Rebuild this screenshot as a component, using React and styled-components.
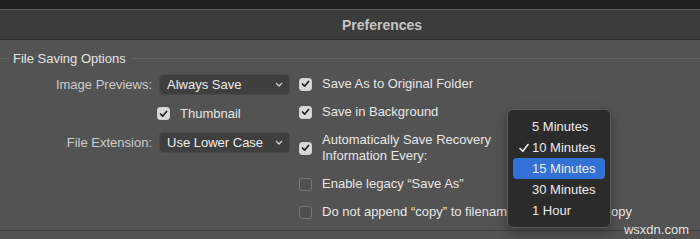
import React from "react";
import styled, { createGlobalStyle } from "styled-components";

const Global = createGlobalStyle`
  html, body { margin: 0; padding: 0; background: #535353; overflow: hidden; }
  body { font-family: "Liberation Sans", Arial, sans-serif; font-size: 13px; }
`;

const Page = styled.div`
  position: relative;
  width: 700px;
  height: 239px;
  background: #535353;
  overflow: hidden;
`;

const TopStrip = styled.div`
  height: 9px;
  background: #1f1f1f;
  border-bottom: 1px solid #5e5e5e;
`;

const TitleBar = styled.div`
  height: 29px;
  display: flex;
  align-items: center;
  justify-content: center;
  padding-left: 64px;
  background: #3c3c3c;
  border-bottom: 1px solid #2c2c2c;
  color: #c4c4c4;
  font-weight: bold;
  font-size: 14px;
`;

const Panel = styled.div`
  height: 180px;
  padding-top: 10px;
  border-bottom: 1px solid #404040;
`;

const GroupHeader = styled.div`
  display: flex;
  align-items: center;
  gap: 3px;
  height: 16px;
  color: #e4e4e4;
  font-size: 13px;
  &::before, &::after {
    content: "";
    height: 1px;
    background: #646464;
  }
  &::before { width: 10px; }
  &::after { flex: 1; margin-left: 2px; }
`;

const Body = styled.div`
  display: flex;
  align-items: flex-start;
  gap: 9px;
`;

const LeftCol = styled.div`
  width: 290px;
  margin-top: 8px;
  display: grid;
  grid-template-columns: 152px 131px;
  grid-auto-rows: 21px;
  column-gap: 7px;
  row-gap: 8px;
  align-items: center;
`;

const Label = styled.div`
  text-align: right;
  color: #cdcdcd;
  line-height: 16px;
`;

const Select = styled.div`
  height: 21px;
  box-sizing: border-box;
  display: flex;
  align-items: center;
  justify-content: space-between;
  padding: 0 6px 0 7px;
  background: #3f3f3f;
  border: 1px solid #4a4a4a;
  border-radius: 4px;
  color: #ececec;
`;

const Chevron = () => (
  <svg width="8" height="5" viewBox="0 0 8 5">
    <polyline points="1,1 4,4 7,1" fill="none" stroke="#d0d0d0" strokeWidth="1.3" />
  </svg>
);

const CheckRow = styled.div`
  display: flex;
  align-items: center;
  gap: ${(p) => p.$gap || 10}px;
  margin-left: ${(p) => p.$shift || 0}px;
  color: #e6e6e6;
  line-height: 16px;
`;

const Box = styled.div`
  flex: none;
  width: 13px;
  height: 13px;
  box-sizing: border-box;
  border-radius: 3px;
  display: flex;
  align-items: center;
  justify-content: center;
  background: ${(p) => (p.$on ? "#d9d9d9" : "#4f4f4f")};
  border: 1px solid ${(p) => (p.$on ? "#cfcfcf" : "#767676")};
`;

const Check = ({ on }) => (
  <Box $on={on}>
    {on && (
      <svg width="9" height="8" viewBox="0 0 9 8">
        <polyline points="1.5,4 3.6,6.2 7.6,1.5" fill="none" stroke="#222" strokeWidth="1.7" strokeLinecap="round" strokeLinejoin="round" />
      </svg>
    )}
  </Box>
);

const RightCol = styled.div`
  margin-top: 10px;
  display: flex;
  flex-direction: column;
  gap: 12px;
`;

const Menu = styled.div`
  position: absolute;
  left: 507px;
  top: 109px;
  width: 104px;
  height: 119px;
  box-sizing: border-box;
  padding: 6px 5px;
  background: #2b2b2b;
  border: 1px solid #5a5a5a;
  border-radius: 6px;
  box-shadow: 0 4px 12px rgba(0, 0, 0, 0.35);
  display: flex;
  flex-direction: column;
`;

const MenuItem = styled.div`
  position: relative;
  height: 21.4px;
  display: flex;
  align-items: center;
  padding-left: 19px;
  border-radius: 4px;
  color: #ececec;
  background: ${(p) => (p.$active ? "#3271d6" : "transparent")};
`;

const MenuCheck = styled.svg`
  position: absolute;
  left: 6px;
  top: 6px;
`;

const Watermark = styled.div`
  position: absolute;
  right: 11px;
  bottom: 2px;
  color: #e2e2e2;
  font-size: 13px;
`;

export default function App() {
  const items = ["5 Minutes", "10 Minutes", "15 Minutes", "30 Minutes", "1 Hour"];
  return (
    <Page>
      <Global />
      <TopStrip />
      <TitleBar>Preferences</TitleBar>
      <Panel>
        <GroupHeader>File Saving Options</GroupHeader>
        <Body>
          <LeftCol>
            <Label>Image Previews:</Label>
            <Select>
              Always Save
              <Chevron />
            </Select>
            <div />
            <CheckRow $gap={10} $shift={-2}>
              <Check on />
              Thumbnail
            </CheckRow>
            <Label>File Extension:</Label>
            <Select>
              Use Lower Case
              <Chevron />
            </Select>
          </LeftCol>
          <RightCol>
            <CheckRow>
              <Check on />
              Save As to Original Folder
            </CheckRow>
            <CheckRow>
              <Check on />
              Save in Background
            </CheckRow>
            <CheckRow>
              <Check on />
              <span>
                Automatically Save Recovery
                <br />
                Information Every:
              </span>
            </CheckRow>
            <CheckRow>
              <Check />
              Enable legacy “Save As”
            </CheckRow>
            <CheckRow>
              <Check />
              Do not append “copy” to filename when saving a copy
            </CheckRow>
          </RightCol>
        </Body>
      </Panel>
      <Menu>
        {items.map((t, i) => (
          <MenuItem key={t} $active={i === 2}>
            {i === 1 && (
              <MenuCheck width="10" height="10" viewBox="0 0 10 10">
                <polyline points="1,5.5 3.8,8.3 9,1.5" fill="none" stroke="#ececec" strokeWidth="1.6" strokeLinecap="round" strokeLinejoin="round" />
              </MenuCheck>
            )}
            {t}
          </MenuItem>
        ))}
      </Menu>
      <Watermark>wsxdn.com</Watermark>
    </Page>
  );
}
